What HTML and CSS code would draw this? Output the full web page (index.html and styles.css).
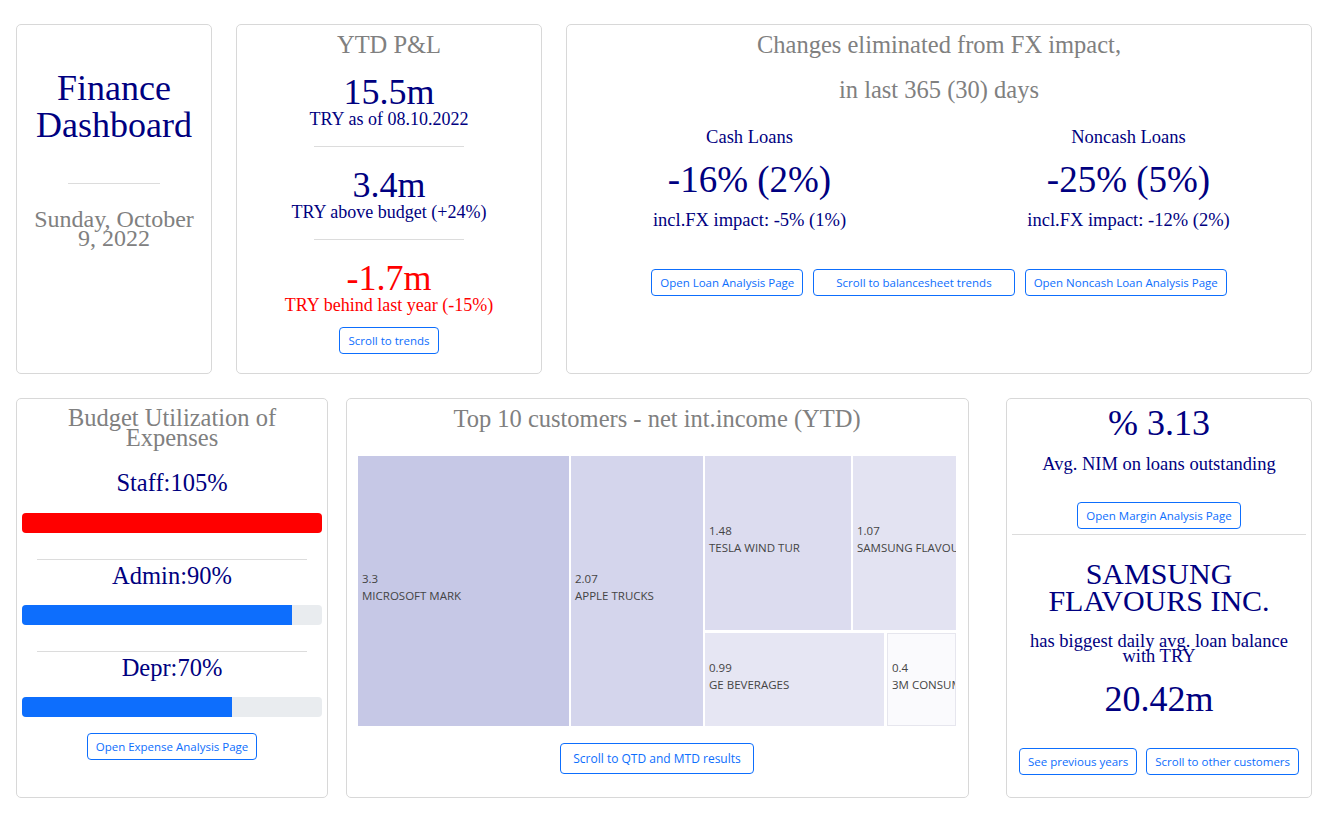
FILE: index.html
```html
<!DOCTYPE html>
<html lang="en">
<head>
<meta charset="utf-8">
<title>Finance Dashboard</title>
<link rel="stylesheet" href="styles.css">
</head>
<body>
<main class="dash">
  <div class="row row-top">
    <section class="card card-title">
      <h1 class="page-title">Finance Dashboard</h1>
      <hr class="rule rule-title">
      <div class="date">Sunday, October 9, 2022</div>
    </section>

    <section class="card card-pl">
      <h2 class="card-head">YTD P&amp;L</h2>
      <div class="big">15.5m</div>
      <div class="sub">TRY as of 08.10.2022</div>
      <hr class="rule rule-pl">
      <div class="big">3.4m</div>
      <div class="sub">TRY above budget (+24%)</div>
      <hr class="rule rule-pl">
      <div class="big neg">-1.7m</div>
      <div class="sub neg">TRY behind last year (-15%)</div>
      <button class="btn btn-pl">Scroll to trends</button>
    </section>

    <section class="card card-fx">
      <h2 class="card-head">Changes eliminated from FX impact,</h2>
      <h2 class="card-head fx-second">in last 365 (30) days</h2>
      <div class="fx-cols">
        <div class="fx-col">
          <div class="fx-label">Cash Loans</div>
          <div class="fx-big">-16% (2%)</div>
          <div class="fx-sub">incl.FX impact: -5% (1%)</div>
        </div>
        <div class="fx-col">
          <div class="fx-label">Noncash Loans</div>
          <div class="fx-big">-25% (5%)</div>
          <div class="fx-sub">incl.FX impact: -12% (2%)</div>
        </div>
      </div>
      <div class="btn-row fx-btns">
        <button class="btn">Open Loan Analysis Page</button>
        <button class="btn btn-wide">Scroll to balancesheet trends</button>
        <button class="btn">Open Noncash Loan Analysis Page</button>
      </div>
    </section>
  </div>

  <div class="row row-bottom">
    <section class="card card-budget">
      <h2 class="card-head budget-head">Budget Utilization of Expenses</h2>
      <div class="bud-label first">Staff:105%</div>
      <div class="bar"><div class="bar-fill over" style="width:100%"></div></div>
      <hr class="rule rule-bud">
      <div class="bud-label">Admin:90%</div>
      <div class="bar"><div class="bar-fill" style="width:90%"></div></div>
      <hr class="rule rule-bud">
      <div class="bud-label">Depr:70%</div>
      <div class="bar"><div class="bar-fill" style="width:70%"></div></div>
      <button class="btn btn-bud">Open Expense Analysis Page</button>
    </section>

    <section class="card card-top">
      <h2 class="card-head">Top 10 customers - net int.income (YTD)</h2>
      <div class="treemap">
        <div class="tm-cell tm-ms"><span class="tm-label">3.3<br>MICROSOFT MARK</span></div>
        <div class="tm-cell tm-apple"><span class="tm-label">2.07<br>APPLE TRUCKS</span></div>
        <div class="tm-right">
          <div class="tm-row tm-row-top">
            <div class="tm-cell tm-tesla"><span class="tm-label">1.48<br>TESLA WIND TUR</span></div>
            <div class="tm-cell tm-samsung"><span class="tm-label">1.07<br>SAMSUNG FLAVOU</span></div>
          </div>
          <div class="tm-row tm-row-bottom">
            <div class="tm-cell tm-ge"><span class="tm-label">0.99<br>GE BEVERAGES</span></div>
            <div class="tm-cell tm-3m"><span class="tm-label">0.4<br>3M CONSUMER PR</span></div>
          </div>
        </div>
      </div>
      <button class="btn btn-lg">Scroll to QTD and MTD results</button>
    </section>

    <section class="card card-nim">
      <div class="nim-big">% 3.13</div>
      <div class="nim-sub">Avg. NIM on loans outstanding</div>
      <button class="btn btn-nim">Open Margin Analysis Page</button>
      <hr class="rule rule-nim">
      <div class="cust-name">SAMSUNG FLAVOURS INC.</div>
      <div class="cust-sub">has biggest daily avg. loan balance with TRY</div>
      <div class="nim-big cust-val">20.42m</div>
      <div class="btn-row nim-btns">
        <button class="btn">See previous years</button>
        <button class="btn">Scroll to other customers</button>
      </div>
    </section>
  </div>
</main>
</body>
</html>
```

FILE: styles.css
```css
* { box-sizing: border-box; }

body {
  margin: 0;
  background: #ffffff;
  font-family: "Liberation Serif", "Times New Roman", serif;
  color: #000080;
}

.dash {
  padding: 24px 16px 0 16px;
  display: flex;
  flex-direction: column;
  gap: 24px;
}

.row { display: flex; }
.row-top { height: 350px; gap: 24px; }
.row-bottom { height: 400px; }

.card {
  border: 1px solid #d8d8d8;
  border-radius: 5px;
  background: #fff;
  text-align: center;
  display: flex;
  flex-direction: column;
  align-items: center;
  flex-shrink: 0;
}

.card-head {
  margin: 0;
  font-weight: normal;
  font-size: 24.5px;
  line-height: 30px;
  color: #808080;
}

.rule {
  border: 0;
  border-top: 1px solid #dcdcdc;
  height: 0;
}

/* Buttons */
.btn {
  font-family: "Open Sans", "Noto Sans", sans-serif;
  font-size: 11.5px;
  line-height: 17px;
  padding: 4px 8px;
  color: #0d6efd;
  background: #fff;
  border: 1px solid #0d6efd;
  border-radius: 4px;
  white-space: nowrap;
}
.btn-row { display: flex; justify-content: center; }

/* Card 1 */
.card-title { width: 196px; padding: 45px 10px 0; }
.page-title {
  margin: 0;
  font-weight: normal;
  font-size: 36px;
  line-height: 37px;
  color: #000080;
}
.rule-title { width: 92px; margin: 39px 0 0; }
.date {
  margin-top: 26px;
  font-size: 24px;
  line-height: 19px;
  color: #808080;
}

/* Card 2 */
.card-pl { width: 306px; padding-top: 5px; }
.card-pl .card-head { margin-bottom: 16px; }
.big { font-size: 36px; line-height: 33px; }
.sub { font-size: 18px; line-height: 18px; margin-top: 1px; }
.neg { color: #ff0000; }
.rule-pl { width: 150px; margin: 18px 0 22px; }
.btn-pl { margin-top: 13px; }

/* Card 3 */
.card-fx { width: 746px; padding-top: 5px; }
.fx-second { margin-top: 15px; }
.fx-cols {
  display: flex;
  align-self: stretch;
  margin: 21px -7px 0;
}
.fx-col { flex: 1; display: flex; flex-direction: column; align-items: center; }
.fx-label { font-size: 18.5px; line-height: 22px; }
.fx-big { font-size: 37px; line-height: 44px; margin-top: 10px; }
.fx-sub { font-size: 18.5px; line-height: 22px; margin-top: 7px; }
.fx-btns { margin-top: 38px; gap: 10px; }
.btn-wide { padding-left: 22px; padding-right: 22px; }

/* Card 4 */
.card-budget { width: 312px; padding: 9px 5px 0; }
.budget-head { line-height: 20px; padding: 0 30px; }
.bud-label { font-size: 24.5px; line-height: 30px; margin-top: 1px; }
.bud-label.first { margin-top: 20px; }
.bar {
  width: 300px;
  height: 20px;
  margin-top: 14px;
  background: #e9ecef;
  border-radius: 4px;
  overflow: hidden;
  display: flex;
}
.bud-label.first + .bar { margin-top: 15px; }
.bar-fill { height: 100%; background: #0d6efd; }
.bar-fill.over { background: #ff0000; }
.rule-bud { width: 270px; margin: 26px 0 0; }
.btn-bud { margin-top: 16px; }

/* Card 5 */
.card-top { width: 623px; margin-left: 18px; padding: 5px 12px 0 11px; }
.treemap {
  width: 598px;
  height: 270px;
  margin-top: 22px;
  display: flex;
  gap: 2px;
}
.tm-cell {
  display: flex;
  align-items: center;
  overflow: hidden;
  text-align: left;
  min-width: 0;
}
.tm-label {
  font-family: "Open Sans", "Noto Sans", sans-serif;
  font-size: 11.5px;
  line-height: 17px;
  color: #444;
  padding: 0 0 8px 4px;
  white-space: nowrap;
}
.tm-ms { width: 211px; flex-shrink: 0; background: #c6c8e6; }
.tm-apple { width: 132px; flex-shrink: 0; background: #d4d5ec; }
.tm-right { flex: 1; min-width: 0; display: flex; flex-direction: column; gap: 3px; }
.tm-row { display: flex; }
.tm-row-top { height: 174px; gap: 2px; }
.tm-row-bottom { flex: 1; gap: 3px; }
.tm-tesla { width: 146px; flex-shrink: 0; background: #dcdcef; }
.tm-samsung { flex: 1; background: #e3e3f2; }
.tm-ge { width: 179px; flex-shrink: 0; background: #e6e6f3; }
.tm-3m { flex: 1; background: #fafafd; border: 1px solid #e6e6ee; }
.btn-lg { margin-top: 17px; padding: 6px 12px; font-size: 12px; }

/* Card 6 */
.card-nim { width: 306px; margin-left: auto; padding: 4px 5px 0; }
.nim-big { font-size: 36px; line-height: 40px; }
.nim-sub { font-size: 18.5px; line-height: 22px; margin-top: 10px; }
.btn-nim { margin-top: 27px; }
.rule-nim { align-self: stretch; margin: 5px 0 0; }
.cust-name { font-size: 30px; line-height: 27px; margin-top: 25px; padding: 0 8px; }
.cust-sub { font-size: 18.5px; line-height: 15px; margin-top: 20px; padding: 0 8px; }
.cust-val { margin-top: 15px; }
.nim-btns { margin-top: 29px; gap: 9px; }
```
